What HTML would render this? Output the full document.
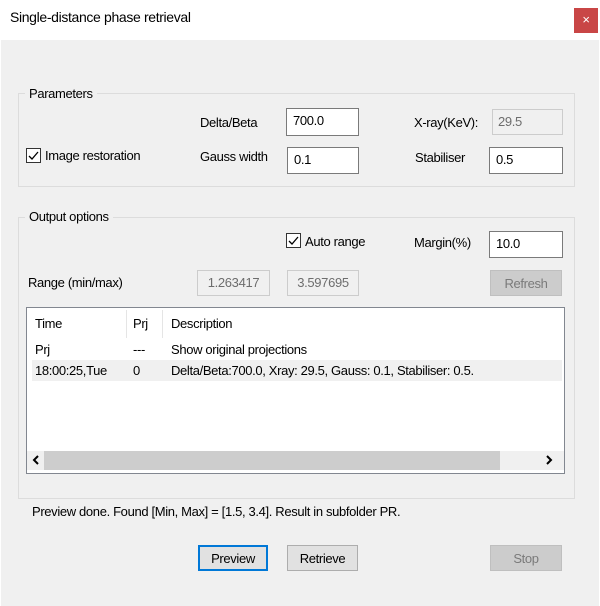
<!DOCTYPE html>
<html><head><style>
*{margin:0;padding:0;box-sizing:border-box}
body{width:600px;height:606px;background:#fff;font-family:"Liberation Sans",sans-serif;font-size:13px;color:#000;position:relative;overflow:hidden;letter-spacing:-0.35px}
.a{position:absolute;white-space:nowrap}
.body{position:absolute;left:1px;top:40px;width:598px;height:566px;background:#f0f0f0}
.grp{position:absolute;border:1px solid #dcdcdc}
.inp{position:absolute;background:#fff;border:1px solid #7a7a7a;padding:4px 0 0 6px}
.dis{position:absolute;background:#f0f0f0;border:1px solid #ccc;color:#6d6d6d;padding:4px 0 0 0;text-align:center}
.btn{position:absolute;background:#e1e1e1;border:1px solid #adadad;text-align:center;padding-top:5px}
.cb{position:absolute;width:15px;height:15px;border:1px solid #333;background:#fff}
</style></head><body>
<div class="a" style="left:10px;top:9px;font-size:14px">Single-distance phase retrieval</div>
<div class="a" style="left:574px;top:8px;width:24px;height:25px;background:#c94646;color:#fff;text-align:center;font-size:13px;line-height:24px">×</div>
<div class="body"></div>
<div class="grp" style="left:18px;top:93px;width:557px;height:94px"></div>
<div class="a" style="left:25px;top:86px;background:#f0f0f0;padding:0 4px">Parameters</div>
<div class="a" style="left:200px;top:115px">Delta/Beta</div>
<div class="inp" style="left:286px;top:108px;width:73px;height:28px">700.0</div>
<div class="a" style="left:414px;top:115px">X-ray(KeV):</div>
<div class="dis" style="left:492px;top:109px;width:71px;height:26px;text-align:left;padding-left:5px">29.5</div>
<div class="cb" style="left:26px;top:148px"></div>
<svg class="a" style="left:26px;top:148px" width="15" height="15"><path d="M3 8l3 3 6-7" stroke="#000" stroke-width="1.3" fill="none"/></svg>
<div class="a" style="left:45px;top:148px">Image restoration</div>
<div class="a" style="left:200px;top:149px">Gauss width</div>
<div class="inp" style="left:287px;top:147px;width:72px;height:27px">0.1</div>
<div class="a" style="left:415px;top:150px">Stabiliser</div>
<div class="inp" style="left:489px;top:147px;width:74px;height:27px">0.5</div>

<div class="grp" style="left:18px;top:217px;width:557px;height:282px"></div>
<div class="a" style="left:25px;top:209px;background:#f0f0f0;padding:0 4px">Output options</div>
<div class="cb" style="left:286px;top:233px"></div>
<svg class="a" style="left:286px;top:233px" width="15" height="15"><path d="M3 8l3 3 6-7" stroke="#000" stroke-width="1.3" fill="none"/></svg>
<div class="a" style="left:305px;top:234px">Auto range</div>
<div class="a" style="left:414px;top:235px">Margin(%)</div>
<div class="inp" style="left:489px;top:231px;width:74px;height:27px">10.0</div>
<div class="a" style="left:28px;top:275px">Range (min/max)</div>
<div class="dis" style="left:197px;top:270px;width:73px;height:26px">1.263417</div>
<div class="dis" style="left:287px;top:270px;width:72px;height:26px">3.597695</div>
<div class="btn" style="left:490px;top:270px;width:72px;height:26px;background:#cccccc;border-color:#bfbfbf;color:#7a7a7a">Refresh</div>

<div class="a" style="left:26px;top:307px;width:539px;height:167px;background:#fff;border:1px solid #828790"></div>
<div class="a" style="left:35px;top:316px">Time</div>
<div class="a" style="left:126px;top:310px;width:1px;height:28px;background:#e5e5e5"></div>
<div class="a" style="left:133px;top:316px">Prj</div>
<div class="a" style="left:162px;top:310px;width:1px;height:28px;background:#e5e5e5"></div>
<div class="a" style="left:171px;top:316px">Description</div>
<div class="a" style="left:35px;top:342px">Prj</div>
<div class="a" style="left:133px;top:342px">---</div>
<div class="a" style="left:171px;top:342px">Show original projections</div>
<div class="a" style="left:32px;top:360px;width:530px;height:21px;background:#f0f0f0"></div>
<div class="a" style="left:35px;top:363px">18:00:25,Tue</div>
<div class="a" style="left:133px;top:363px">0</div>
<div class="a" style="left:171px;top:363px">Delta/Beta:700.0, Xray: 29.5, Gauss: 0.1, Stabiliser: 0.5.</div>
<div class="a" style="left:27px;top:451px;width:537px;height:19px;background:#f0f0f0"></div>
<div class="a" style="left:44px;top:451px;width:456px;height:19px;background:#cdcdcd"></div>
<svg class="a" style="left:30px;top:454px" width="12" height="12"><path d="M8 2L4 6l4 4" stroke="#000" stroke-width="2" fill="none"/></svg>
<svg class="a" style="left:543px;top:454px" width="12" height="12"><path d="M4 2l4 4-4 4" stroke="#000" stroke-width="2" fill="none"/></svg>

<div class="a" style="left:32px;top:504px">Preview done. Found [Min, Max] = [1.5, 3.4]. Result in subfolder PR.</div>
<div class="btn" style="left:198px;top:545px;width:70px;height:26px;border:2px solid #0078d7;padding-top:4px">Preview</div>
<div class="btn" style="left:287px;top:545px;width:71px;height:26px">Retrieve</div>
<div class="btn" style="left:490px;top:545px;width:72px;height:26px;background:#cccccc;border-color:#bfbfbf;color:#7a7a7a">Stop</div>
</body></html>
